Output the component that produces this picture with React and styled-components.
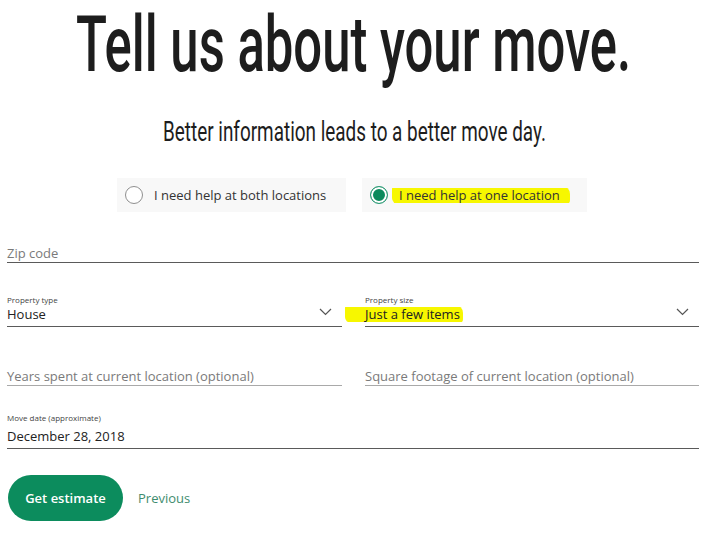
import React from "react";
import styled, { createGlobalStyle } from "styled-components";

const GlobalStyle = createGlobalStyle`
  html, body {
    margin: 0;
    padding: 0;
    background: #fff;
  }
  body {
    font-family: "Open Sans", "Liberation Sans", sans-serif;
    color: #222;
  }
`;

const Page = styled.div`
  width: 720px;
  padding: 0 21px 0 7px;
  box-sizing: border-box;
`;

const Header = styled.header`
  display: flex;
  flex-direction: column;
  align-items: center;
  padding-left: 2px;
`;

const Title = styled.h1`
  margin: 0;
  font-family: "Roboto", "Liberation Sans", sans-serif;
  font-weight: 500;
  font-size: 77px;
  line-height: 90px;
  color: #1d1d1d;
  white-space: nowrap;
  transform: scaleX(0.66);
`;

const Subtitle = styled.h2`
  margin: 25px 0 0;
  font-family: "Roboto", "Liberation Sans", sans-serif;
  font-weight: 400;
  font-size: 27px;
  line-height: 34px;
  color: #1d1d1d;
  white-space: nowrap;
  transform: scaleX(0.7);
`;

const Choices = styled.div`
  display: flex;
  justify-content: center;
  gap: 16px;
  margin-top: 29px;
  padding-right: 2px;
`;

const Choice = styled.label`
  display: flex;
  align-items: center;
  gap: 11px;
  width: ${(p) => p.$width}px;
  height: 34px;
  padding-left: 8px;
  box-sizing: border-box;
  background: #f8f8f8;
  font-size: 13px;
  color: #333;
  cursor: pointer;
`;

const Radio = styled.span`
  width: 18px;
  height: 18px;
  border-radius: 50%;
  box-sizing: border-box;
  flex: none;
  border: ${(p) => (p.$checked ? "1.5px solid #2f9c78" : "1.5px solid #8f8f8f")};
  background: ${(p) => (p.$checked ? "#0b8a5c" : "#fff")};
  box-shadow: ${(p) => (p.$checked ? "inset 0 0 0 2px #fff" : "none")};
`;

const Marker = styled.span`
  background: linear-gradient(
    transparent 10%,
    #f7f700 10%,
    #f7f700 94%,
    transparent 94%
  );
  padding: 0 ${(p) => p.$right}px 0 ${(p) => p.$left}px;
  margin-left: -${(p) => p.$left}px;
  border-radius: 3px 8px 4px 6px;
`;

const Form = styled.div`
  display: grid;
  grid-template-columns: 335px 334px;
  column-gap: 23px;
  margin-top: 20px;
`;

const Field = styled.div`
  grid-column: ${(p) => (p.$full ? "1 / -1" : "auto")};
  display: flex;
  flex-direction: column;
  justify-content: flex-end;
  height: ${(p) => p.$height}px;
  border-bottom: 1px solid ${(p) => (p.$light ? "#a9a9a9" : "#5a5a5a")};
`;

const Label = styled.div`
  font-size: 8px;
  line-height: 9px;
  margin-bottom: ${(p) => p.$gap || 0}px;
  color: #444;
`;

const ValueRow = styled.div`
  display: flex;
  align-items: center;
  justify-content: space-between;
  height: 19px;
  padding-bottom: ${(p) => (p.$tight ? 0 : 3)}px;
`;

const Value = styled.span`
  font-size: 13px;
  color: ${(p) => (p.$placeholder ? "#7a7a7a" : "#222")};
`;

const Chevron = styled.svg`
  width: 13px;
  height: 8px;
  margin-right: 10px;
  margin-bottom: 4px;
`;

const Actions = styled.div`
  display: flex;
  align-items: center;
  gap: 15px;
  margin-top: 26px;
  margin-left: 1px;
`;

const PrimaryButton = styled.button`
  width: 115px;
  height: 46px;
  border: none;
  border-radius: 23px;
  background: #0c8c5d;
  color: #fff;
  font-family: "Open Sans", "Liberation Sans", sans-serif;
  font-size: 13px;
  font-weight: 600;
  cursor: pointer;
`;

const LinkButton = styled.button`
  border: none;
  background: none;
  padding: 0;
  color: #3e8c6e;
  font-family: "Open Sans", "Liberation Sans", sans-serif;
  font-size: 13px;
  cursor: pointer;
`;

function ChevronDown() {
  return (
    <Chevron viewBox="0 0 13 8" fill="none">
      <path d="M1 1l5.5 5.5L12 1" stroke="#555" strokeWidth="1.2" />
    </Chevron>
  );
}

export default function App() {
  return (
    <Page>
      <GlobalStyle />
      <Header>
        <Title>Tell us about your move.</Title>
        <Subtitle>Better information leads to a better move day.</Subtitle>
      </Header>

      <Choices>
        <Choice $width={229}>
          <Radio />
          I need help at both locations
        </Choice>
        <Choice $width={225}>
          <Radio $checked />
          <Marker $left={7} $right={10}>I need help at one location</Marker>
        </Choice>
      </Choices>

      <Form>
        <Field $full $height={30}>
          <ValueRow $tight>
            <Value $placeholder>Zip code</Value>
          </ValueRow>
        </Field>

        <Field $height={63}>
          <Label>Property type</Label>
          <ValueRow>
            <Value>House</Value>
            <ChevronDown />
          </ValueRow>
        </Field>
        <Field $height={63}>
          <Label>Property size</Label>
          <ValueRow>
            <Value>
              <Marker $left={20} $right={3}>Just a few items</Marker>
            </Value>
            <ChevronDown />
          </ValueRow>
        </Field>

        <Field $light $height={58}>
          <ValueRow $tight>
            <Value $placeholder>Years spent at current location (optional)</Value>
          </ValueRow>
        </Field>
        <Field $light $height={58}>
          <ValueRow $tight>
            <Value $placeholder>Square footage of current location (optional)</Value>
          </ValueRow>
        </Field>

        <Field $full $height={62}>
          <Label $gap={4}>Move date (approximate)</Label>
          <ValueRow>
            <Value>December 28, 2018</Value>
          </ValueRow>
        </Field>
      </Form>

      <Actions>
        <PrimaryButton>Get estimate</PrimaryButton>
        <LinkButton>Previous</LinkButton>
      </Actions>
    </Page>
  );
}
